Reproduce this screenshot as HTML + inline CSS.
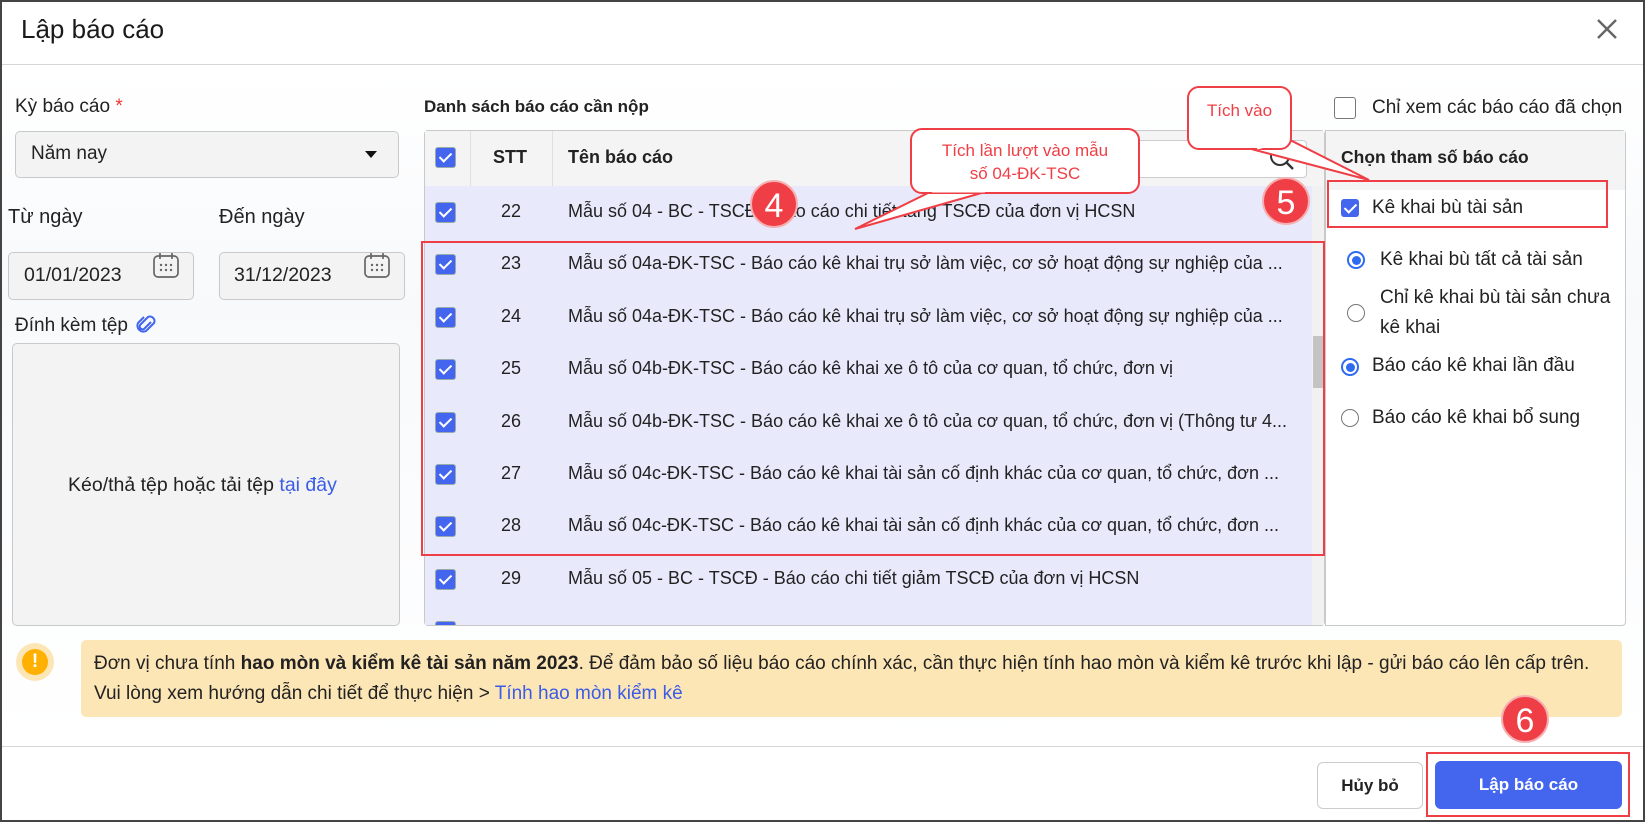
<!DOCTYPE html>
<html><head><meta charset="utf-8">
<style>
*{box-sizing:border-box;margin:0;padding:0}
body{width:1645px;height:822px;overflow:hidden;background:#fff;font-family:"Liberation Sans",sans-serif;color:#222;position:relative}
.frame{position:absolute;left:0;top:0;width:1645px;height:822px;border:2px solid #444;background:linear-gradient(180deg,#fff 0,#fff 70px,#f7f9fb 300px,#fff 740px)}
.a{position:absolute}
.t{font-size:19px;white-space:nowrap}
.box{position:absolute;background:#f3f3f3;border:1px solid #c9c9c9;border-radius:5px}
.cb{position:absolute;width:21px;height:21px;background:#4466ee;border:1px solid #9aa;border-radius:3px}
.cb:after{content:"";position:absolute;left:6px;top:2px;width:5px;height:10px;border:solid #fff;border-width:0 2px 2px 0;transform:rotate(45deg)}
.row{position:absolute;left:425px;width:887px;height:52.4px;background:#e8eafc}
.row .cb{left:10px;top:16px}
.row .n{position:absolute;left:45px;width:82px;text-align:center;top:15px;font-size:18px}
.row .s{position:absolute;left:143px;top:15px;font-size:18px;width:742px;white-space:nowrap;overflow:hidden}
.red{position:absolute;border:2.5px solid #ef3e45}
.badge{position:absolute;width:48px;height:48px;border-radius:50%;background:#ef3e45;color:#fff;font-size:34px;text-align:center;line-height:48px;border:2px solid #f6b0b2}
.radio{position:absolute;width:18px;height:18px;border-radius:50%;border:1.5px solid #777;background:#fff}
.radio.on{border:2px solid #2f6bf0}
.radio.on:after{content:"";position:absolute;left:3px;top:3px;width:9px;height:9px;border-radius:50%;background:#2f6bf0}
.call{position:absolute;border:2px solid #ef3e45;border-radius:12px;background:#fff;color:#ef3e45;font-size:17px;text-align:center}
</style></head><body>
<div class="frame"></div>

<div class="a" style="left:21px;top:14px;font-size:26px;color:#1a1a1a">Lập báo cáo</div>
<svg class="a" style="left:1596px;top:18px" width="22" height="22"><path d="M2 2L20 20M20 2L2 20" stroke="#666" stroke-width="2.4"/></svg>
<div class="a" style="left:2px;top:64px;width:1641px;height:1px;background:#d6d6d6"></div>

<!-- left column -->
<div class="a t" style="left:15px;top:96px">Kỳ báo cáo <span style="color:#e33">*</span></div>
<div class="box" style="left:15px;top:131px;width:384px;height:47px"></div>
<div class="a t" style="left:31px;top:143px">Năm nay</div>
<svg class="a" style="left:365px;top:151px" width="12" height="8"><path d="M0 0H12L6 7Z" fill="#111"/></svg>
<div class="a t" style="left:8px;top:206px;font-size:20px">Từ ngày</div>
<div class="a t" style="left:219px;top:206px;font-size:20px">Đến ngày</div>
<div class="box" style="left:8px;top:252px;width:186px;height:48px"></div>
<div class="box" style="left:219px;top:252px;width:186px;height:48px"></div>
<div class="a t" style="left:24px;top:264px;font-size:19.5px">01/01/2023</div>
<div class="a t" style="left:234px;top:264px;font-size:19.5px">31/12/2023</div>
<svg class="a" style="left:152px;top:250px" width="28" height="30"><rect x="2" y="6" width="24" height="21" rx="4" fill="none" stroke="#666" stroke-width="1.7"/><path d="M8 3v6M20 3v6" stroke="#666" stroke-width="1.7"/><g fill="#666"><circle cx="9" cy="15" r="1.2"/><circle cx="14" cy="15" r="1.2"/><circle cx="19" cy="15" r="1.2"/><circle cx="9" cy="20" r="1.2"/><circle cx="14" cy="20" r="1.2"/><circle cx="19" cy="20" r="1.2"/></g></svg>
<svg class="a" style="left:363px;top:250px" width="28" height="30"><rect x="2" y="6" width="24" height="21" rx="4" fill="none" stroke="#666" stroke-width="1.7"/><path d="M8 3v6M20 3v6" stroke="#666" stroke-width="1.7"/><g fill="#666"><circle cx="9" cy="15" r="1.2"/><circle cx="14" cy="15" r="1.2"/><circle cx="19" cy="15" r="1.2"/><circle cx="9" cy="20" r="1.2"/><circle cx="14" cy="20" r="1.2"/><circle cx="19" cy="20" r="1.2"/></g></svg>
<div class="a t" style="left:15px;top:315px">Đính kèm tệp</div>
<svg class="a" style="left:136px;top:314px" width="20" height="22"><path d="M15 8L8 15a3 3 0 0 1-4-4l8-8a4.5 4.5 0 0 1 6 6l-8 8a6 6 0 0 1-8-8l6-6" fill="none" stroke="#4466ee" stroke-width="2"/></svg>
<div class="box" style="left:12px;top:343px;width:388px;height:283px;background:#f3f3f3"></div>
<div class="a t" style="left:68px;top:474px;font-size:19.5px">Kéo/thả tệp hoặc tải tệp <span style="color:#3a5ce6">tại đây</span></div>

<!-- middle -->
<div class="a t" style="left:424px;top:97px;font-weight:bold;font-size:17px">Danh sách báo cáo cần nộp</div>
<div class="a" style="left:424px;top:130px;width:901px;height:496px;border:1px solid #c9c9c9;border-radius:4px;background:#fff;overflow:hidden"></div>
<div class="a" style="left:425px;top:131px;width:899px;height:55px;background:#f4f4f4"></div>
<div class="a" style="left:470px;top:131px;width:1px;height:55px;background:#e0e0e0"></div>
<div class="a" style="left:552px;top:131px;width:1px;height:55px;background:#e0e0e0"></div>
<div class="cb" style="left:435px;top:147px"></div>
<div class="a t" style="left:493px;top:147px;font-weight:bold;font-size:18px">STT</div>
<div class="a t" style="left:568px;top:147px;font-weight:bold;font-size:18px">Tên báo cáo</div>
<div class="a" style="left:1112px;top:140px;width:195px;height:38px;background:#fff;border:1px solid #ccc;border-radius:4px"></div>
<svg class="a" style="left:1268px;top:144px" width="28" height="28"><circle cx="12" cy="12" r="9" fill="none" stroke="#333" stroke-width="2"/><path d="M18.5 18.5L25 25" stroke="#333" stroke-width="2.4"/></svg>

<div class="row" style="top:186px"><div class="cb"></div><div class="n">22</div><div class="s">Mẫu số 04 - BC - TSCĐ - Báo cáo chi tiết tăng TSCĐ của đơn vị HCSN</div></div>
<div class="row" style="top:238.4px"><div class="cb"></div><div class="n">23</div><div class="s">Mẫu số 04a-ĐK-TSC - Báo cáo kê khai trụ sở làm việc, cơ sở hoạt động sự nghiệp của ...</div></div>
<div class="row" style="top:290.8px"><div class="cb"></div><div class="n">24</div><div class="s">Mẫu số 04a-ĐK-TSC - Báo cáo kê khai trụ sở làm việc, cơ sở hoạt động sự nghiệp của ...</div></div>
<div class="row" style="top:343.2px"><div class="cb"></div><div class="n">25</div><div class="s">Mẫu số 04b-ĐK-TSC - Báo cáo kê khai xe ô tô của cơ quan, tổ chức, đơn vị</div></div>
<div class="row" style="top:395.6px"><div class="cb"></div><div class="n">26</div><div class="s">Mẫu số 04b-ĐK-TSC - Báo cáo kê khai xe ô tô của cơ quan, tổ chức, đơn vị (Thông tư 4...</div></div>
<div class="row" style="top:448px"><div class="cb"></div><div class="n">27</div><div class="s">Mẫu số 04c-ĐK-TSC - Báo cáo kê khai tài sản cố định khác của cơ quan, tổ chức, đơn ...</div></div>
<div class="row" style="top:500.4px"><div class="cb"></div><div class="n">28</div><div class="s">Mẫu số 04c-ĐK-TSC - Báo cáo kê khai tài sản cố định khác của cơ quan, tổ chức, đơn ...</div></div>
<div class="row" style="top:552.8px"><div class="cb"></div><div class="n">29</div><div class="s">Mẫu số 05 - BC - TSCĐ - Báo cáo chi tiết giảm TSCĐ của đơn vị HCSN</div></div>
<div class="row" style="top:605.2px;height:20px;overflow:hidden"><div class="cb"></div></div>
<div class="a" style="left:1312px;top:186px;width:12px;height:439px;background:#f1f1f1"></div>
<div class="a" style="left:1313px;top:336px;width:10px;height:52px;background:#c4c4c4"></div>
<div class="red" style="left:421px;top:241px;width:904px;height:315px"></div>

<!-- right panel -->
<div class="a" style="left:1334px;top:97px;width:22px;height:22px;border:1.5px solid #777;border-radius:3px;background:#fff"></div>
<div class="a t" style="left:1372px;top:97px">Chỉ xem các báo cáo đã chọn</div>
<div class="a" style="left:1325px;top:130px;width:301px;height:496px;border:1px solid #c9c9c9;border-radius:0 4px 4px 0;background:#fff"></div>
<div class="a" style="left:1326px;top:131px;width:299px;height:59px;background:#f4f4f4"></div>
<div class="a t" style="left:1341px;top:147px;font-weight:bold;font-size:17.5px">Chọn tham số báo cáo</div>
<div class="cb" style="left:1341px;top:199px;width:18px;height:18px;border:none"></div>
<div class="a t" style="left:1372px;top:197px">Kê khai bù tài sản</div>
<div class="red" style="left:1327px;top:180px;width:281px;height:48px"></div>
<div class="radio on" style="left:1347px;top:251px"></div>
<div class="a t" style="left:1380px;top:249px">Kê khai bù tất cả tài sản</div>
<div class="radio" style="left:1347px;top:304px"></div>
<div class="a t" style="left:1380px;top:287px">Chỉ kê khai bù tài sản chưa</div>
<div class="a t" style="left:1380px;top:317px">kê khai</div>
<div class="radio on" style="left:1341px;top:358px"></div>
<div class="a t" style="left:1372px;top:355px">Báo cáo kê khai lần đầu</div>
<div class="radio" style="left:1341px;top:409px"></div>
<div class="a t" style="left:1372px;top:407px">Báo cáo kê khai bổ sung</div>

<!-- callouts -->
<svg class="a" style="left:0;top:0" width="1645" height="822">
<path d="M930 192L855 229L985 192Z" fill="#fff" stroke="#ef3e45" stroke-width="2"/>
<path d="M1255 150L1369 180L1290 140Z" fill="#fff" stroke="#ef3e45" stroke-width="2"/>
</svg>
<div class="call" style="left:910px;top:128px;width:230px;height:66px;padding-top:9px;line-height:23px">Tích lần lượt vào mẫu<br>số 04-ĐK-TSC</div>
<div class="call" style="left:1187px;top:86px;width:105px;height:64px;line-height:46px">Tích vào</div>
<svg class="a" style="left:0;top:0" width="1645" height="822">
<path d="M932 191L985 191" stroke="#fff" stroke-width="3"/>
<path d="M1257 148L1289 140" stroke="#fff" stroke-width="3"/>
</svg>
<div class="badge" style="left:750px;top:180px">4</div>
<div class="badge" style="left:1262px;top:177px">5</div>

<!-- warning -->
<div class="a" style="left:16px;top:643px;width:38px;height:38px;border-radius:50%;background:#fde6b6"></div>
<div class="a" style="left:22px;top:649px;width:26px;height:26px;border-radius:50%;background:#ffb000;color:#fff;font-weight:bold;text-align:center;font-size:19px;line-height:26px">!</div>
<div class="a" style="left:81px;top:640px;width:1541px;height:77px;background:#fde6b6;border-radius:5px"></div>
<div class="a t" style="left:94px;top:653px;font-size:19px">Đơn vị chưa tính <b>hao mòn và kiểm kê tài sản năm 2023</b>. Để đảm bảo số liệu báo cáo chính xác, cần thực hiện tính hao mòn và kiểm kê trước khi lập - gửi báo cáo lên cấp trên.</div>
<div class="a t" style="left:94px;top:683px;font-size:19px">Vui lòng xem hướng dẫn chi tiết để thực hiện &gt; <span style="color:#3a5ce6">Tính hao mòn kiểm kê</span></div>

<!-- footer -->
<div class="a" style="left:2px;top:746px;width:1641px;height:1px;background:#d6d6d6"></div>
<div class="a" style="left:1317px;top:762px;width:106px;height:47px;border:1px solid #ccc;border-radius:6px;background:#fff;text-align:center;line-height:45px;font-size:17px;font-weight:bold">Hủy bỏ</div>
<div class="a" style="left:1435px;top:761px;width:187px;height:48px;border-radius:6px;background:#4466ee;color:#fff;text-align:center;line-height:48px;font-size:17px;font-weight:bold">Lập báo cáo</div>
<div class="red" style="left:1426px;top:752px;width:204px;height:65px"></div>
<div class="badge" style="left:1501px;top:695px">6</div>
</body></html>
